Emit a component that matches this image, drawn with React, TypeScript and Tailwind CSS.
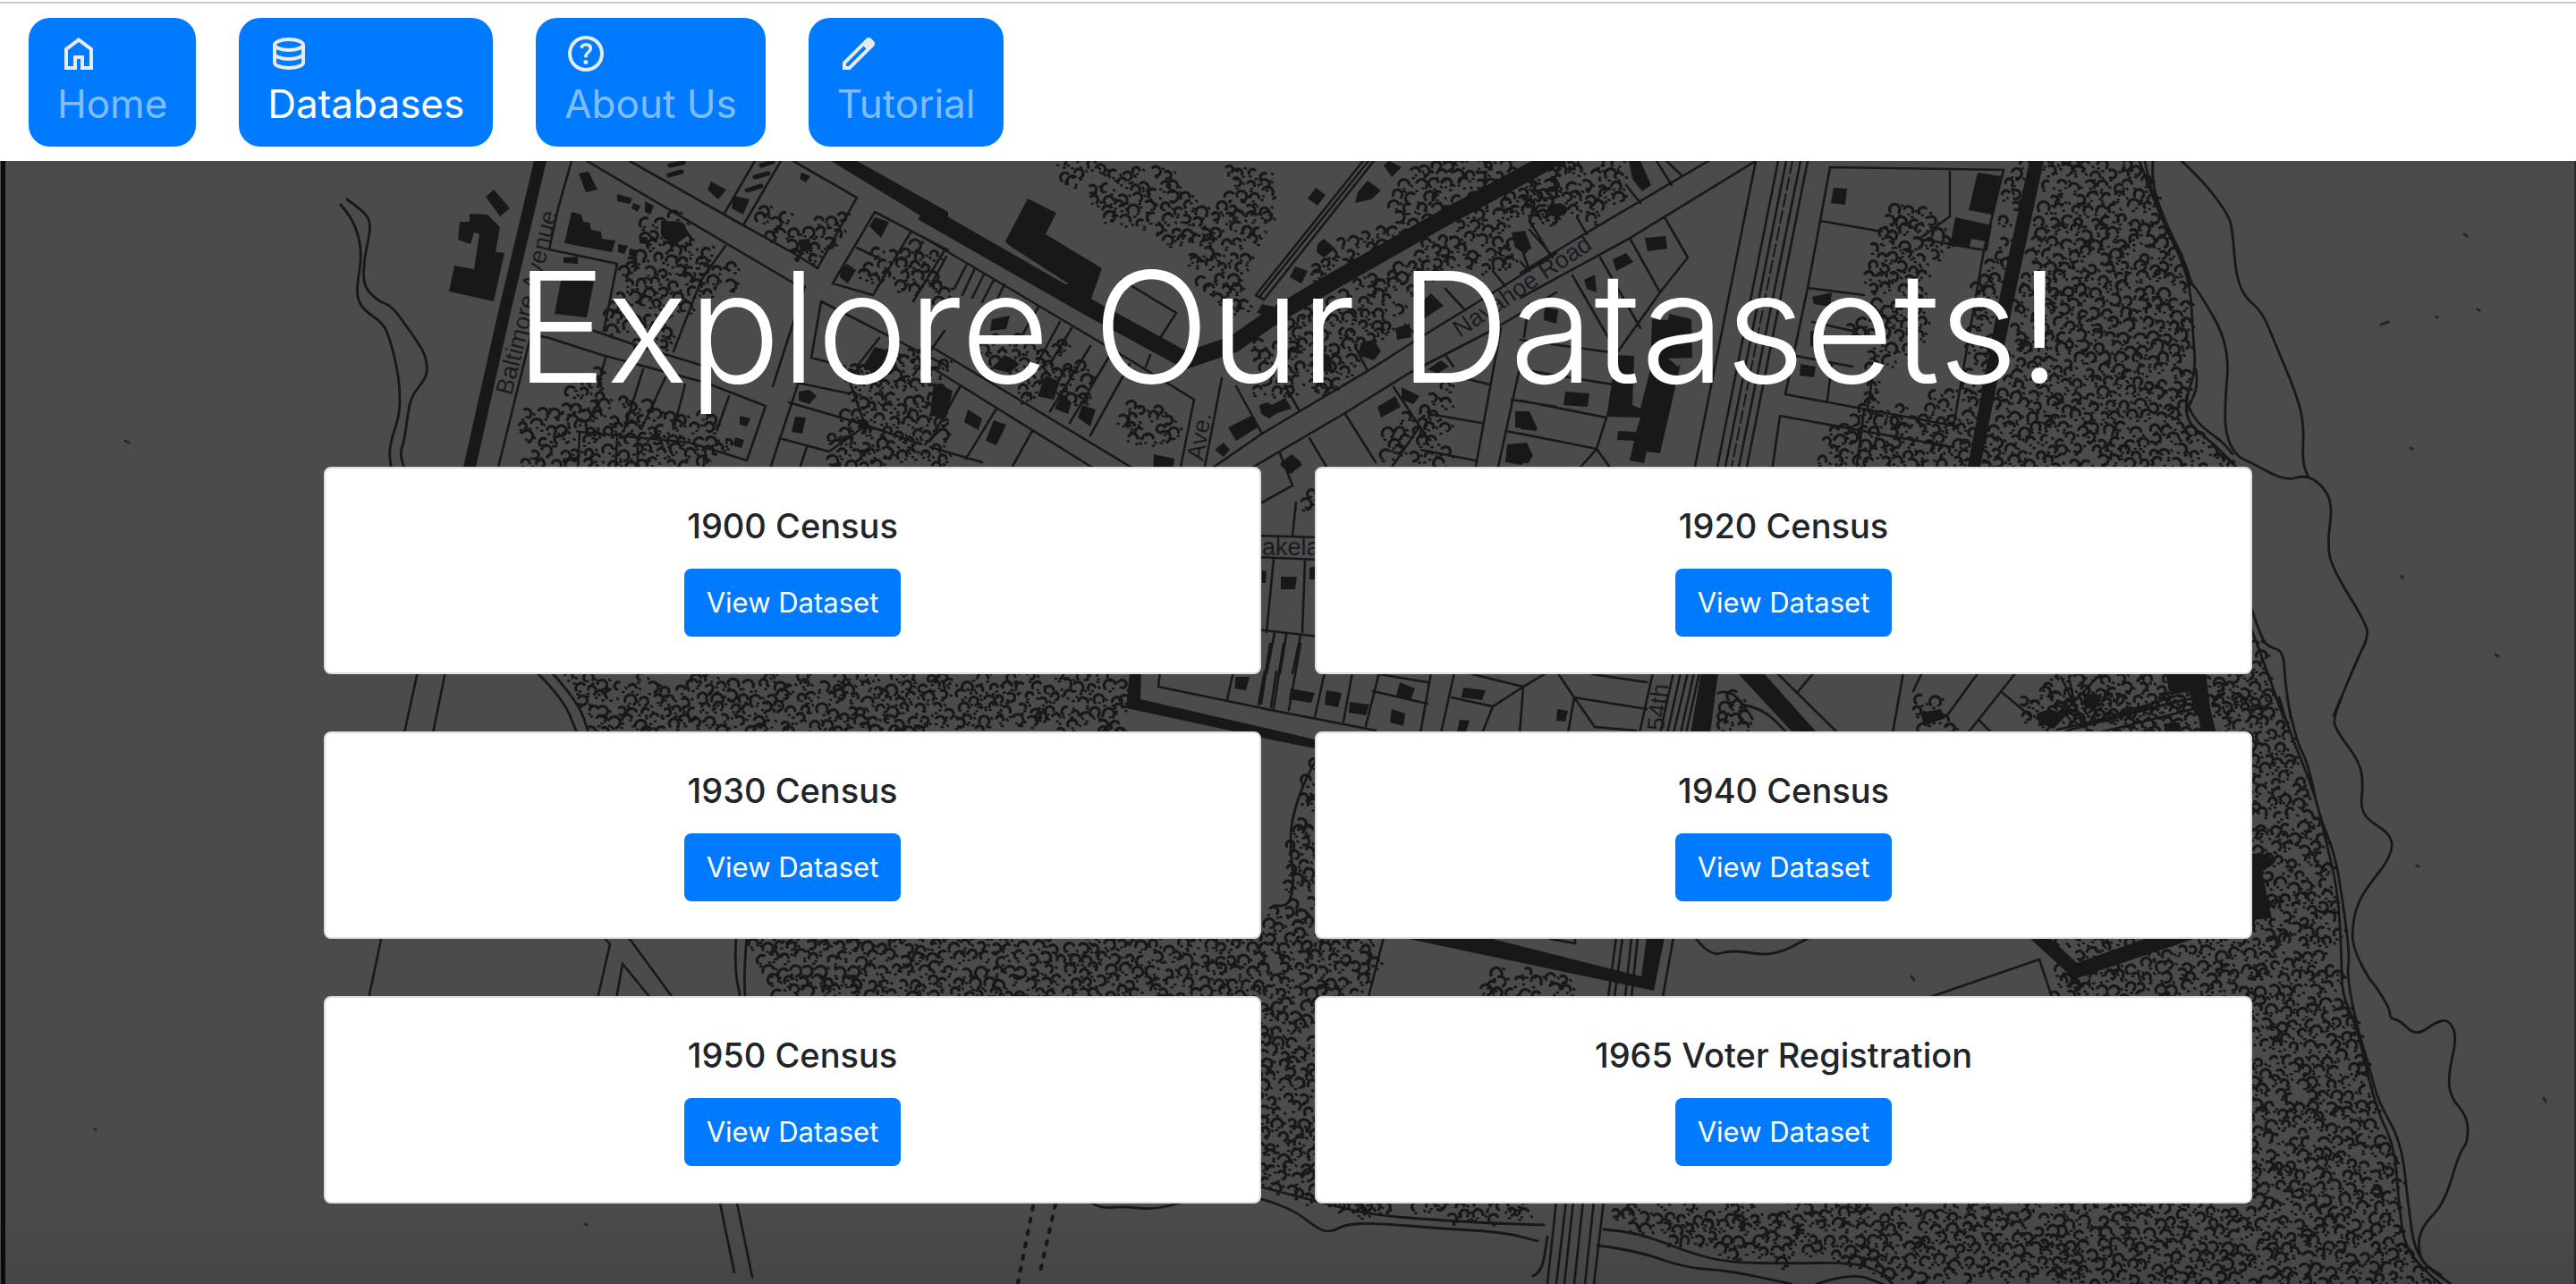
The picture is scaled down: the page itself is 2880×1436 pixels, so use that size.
import React from "react";

type Sheet = { x: number; y: number; sx: number; sy: number };
type Point = [number, number];

/* The survey map is digitised in sheets; each has an origin and a scale. */
const NW: Sheet = { x: 360, y: 180, sx: 2.24, sy: 3 };
const N: Sheet = { x: 1040, y: 180, sx: 2.24, sy: 3 };
const NE: Sheet = { x: 1700, y: 180, sx: 2.24, sy: 3 };
const RIVER_N: Sheet = { x: 2300, y: 180, sx: 2.703, sy: 2.529 };
const RIVER_S: Sheet = { x: 2300, y: 780, sx: 2.703, sy: 2.39 };
const SE: Sheet = { x: 1400, y: 1000, sx: 1.4255, sy: 3 };
const SW: Sheet = { x: 360, y: 740, sx: 1.452, sy: 2.253 };
const MID: Sheet = { x: 1240, y: 720, sx: 1.3067, sy: 3 };
const LAKE: Sheet = { x: 340, y: 500, sx: 1.375, sy: 3 };
const BASE: Sheet = { x: 0, y: 0, sx: 1, sy: 1 };

function pts(s: Sheet, text: string): Point[] {
  return text
    .trim()
    .split(/\s+/)
    .map((p) => {
      const [a, b] = p.split(",").map(Number);
      return [Math.round(s.x + a / s.sx), Math.round(s.y + b / s.sy)] as Point;
    });
}

function straight(s: Sheet, text: string) {
  return text
    .split("|")
    .map((t) => "M" + pts(s, t).map((p) => p.join(" ")).join("L"))
    .join("");
}

function smooth(s: Sheet, text: string) {
  return text
    .split("|")
    .map((t) => {
      const p = pts(s, t);
      let d = `M${p[0].join(" ")}`;
      for (let i = 1; i < p.length - 1; i++) {
        const mx = (p[i][0] + p[i + 1][0]) / 2;
        const my = (p[i][1] + p[i + 1][1]) / 2;
        d += `Q${p[i].join(" ")} ${mx} ${my}`;
      }
      return d + `L${p[p.length - 1].join(" ")}`;
    })
    .join("");
}

function inside(x: number, y: number, poly: Point[]) {
  let hit = false;
  for (let i = 0, j = poly.length - 1; i < poly.length; j = i++) {
    const [xi, yi] = poly[i];
    const [xj, yj] = poly[j];
    if (yi > y !== yj > y && x < ((xj - xi) * (y - yi)) / (yj - yi) + xi) hit = !hit;
  }
  return hit;
}

let seed = 7;
function rand() {
  seed = (seed * 16807) % 2147483647;
  return seed / 2147483647;
}

/* Fills each outline with the scalloped tree-canopy symbol. */
function canopy(s: Sheet, text: string) {
  let arcs = "";
  let dots = "";
  text.split("|").forEach((t) => {
    const poly = pts(s, t);
    const xs = poly.map((p) => p[0]);
    const ys = poly.map((p) => p[1]);
    let row = 0;
    for (let y = Math.min(...ys); y < Math.max(...ys); y += 13) {
      row++;
      for (let x = Math.min(...xs) + (row % 2) * 8; x < Math.max(...xs); x += 16) {
        const cx = x + rand() * 9 - 4;
        const cy = y + rand() * 10 - 4;
        const a = rand() * 2 - 0.8 - Math.PI;
        const sweep = 2.2 + rand() * 2.2;
        const r = 4 + rand() * 2.4;
        const e1 = rand() * 12 - 6;
        const e2 = rand() * 12 - 6;
        if (!inside(cx, cy, poly)) continue;
        const x1 = (cx + r * Math.cos(a)).toFixed(1);
        const y1 = (cy + r * Math.sin(a)).toFixed(1);
        const x2 = (cx + r * Math.cos(a + sweep)).toFixed(1);
        const y2 = (cy + r * Math.sin(a + sweep)).toFixed(1);
        const rr = r.toFixed(1);
        arcs += `M${x1} ${y1}A${rr} ${rr} 0 ${sweep > Math.PI ? 1 : 0} 1 ${x2} ${y2}`;
        dots += `M${(cx + e1).toFixed(1)} ${(cy + 7).toFixed(1)}h1.5M${(cx + 8).toFixed(1)} ${(cy + e2).toFixed(1)}l1 1M${(cx - e2).toFixed(1)} ${(cy + 4).toFixed(1)}h1`;
      }
    }
  });
  return { arcs, dots };
}

const WOODS = [
  canopy(NW, "800,190 850,170 900,195 970,300 1040,370 1030,420 990,440 940,480 890,520 880,620 800,620 710,580 715,500 740,400 760,330 800,250|1080,160 1150,180 1200,200 1290,165 1335,190 1330,240 1280,260 1245,350 1180,330 1120,270 1060,210|1360,310 1480,270 1540,310 1555,400 1480,470 1410,430 1350,380|500,850 600,800 610,700 690,710 700,790 760,800 880,840 990,860 1020,950 960,1040 495,1040|1300,780 1320,690 1480,600 1568,680 1568,1026 1250,1040 1270,900"),
  canopy(N, "310,0 600,0 640,110 690,150 720,120 740,30 800,15 865,45 860,230 790,290 790,500 750,510 700,450 660,410 640,310 560,250 470,220 400,130 330,50|1150,90 1200,20 1260,0 1560,0 1250,210 950,430 920,440 940,390 1010,270 1130,220|1560,30 1568,200 1480,150 1460,360 1400,370 1290,340 1250,420 1180,480 1140,600 1060,620 1050,740 950,780 820,770 790,640 880,560 1000,450 1280,230|460,820 530,780 580,840 620,880 610,950 460,955|270,600 330,610 360,680 400,650 420,700 390,800 240,800 200,700 120,660 150,560 200,560|1150,880 1300,740 1300,890 1290,1026 1120,1000|0,330 60,390 50,470 0,500"),
  canopy(NE, "0,60 40,20 60,0 240,0 275,90 230,140 170,200 130,200 60,200 0,200|925,155 1000,155 1050,190 1060,260 1080,290 1030,330 1010,500 1000,640 900,700 880,830 1000,830 1090,720 1090,890 850,880 870,620 810,640 810,540 860,520 865,400 880,270|1230,20 1270,0 1200,460 1150,850 1118,1040 745,1040 760,900 830,850 1000,860 1100,900 1140,430 1180,290"),
  canopy(RIVER_N, "-40,0 255,0 275,70 320,170 375,280 400,370 410,500 415,590 385,690 400,750 560,880 -235,880|588,1330 640,1450 685,1568 0,1568 0,1450 588,1450"),
  canopy(RIVER_S, "0,0 670,0 700,110 775,260 850,520 855,780 905,900 960,1110 1020,1210 1040,1460 1120,1568 0,1568 0,720 50,740 420,650 0,650"),
  canopy(SE, "575,1038 1290,1038 1290,1308 1015,1308 960,1235 780,1235 650,1165 575,1110|110,1038 455,1038 450,1090 380,1100 200,1070 120,1045|355,290 400,250 490,260 510,345 355,345|1260,220 1310,280 1320,275 1320,345 1275,345|1270,150 1430,150 1315,230"),
  canopy(BASE, "832,1040 1410,1040 1410,1015 1436,1010 1442,940 1455,880 1470,850 1470,1040 1544,1040 1530,1114 1530,1360 1410,1326 900,1200"),
  canopy(SW, "390,32 1310,32 1300,180 432,180 415,100"),
  canopy(MID, "890,170 910,160 935,250 930,292 880,292|1175,170 1210,160 1240,250 1230,292 1165,292|1330,170 1380,95 1385,95 1385,295 1340,292 1340,220"),
  canopy(LAKE, "1520,170 1555,140 1555,215 1525,215"),
];

const BLOCKS = [
  straight(NW, "530,0 562,0 470,520 384,1040 352,1040 440,520|430,95 470,160 445,185 411,120|370,178 415,180 445,222 435,305 457,308 430,470 318,438 332,352 380,362 395,245 380,240 372,278 340,265 345,205 370,205|642,42 668,35 690,95 660,104|625,172 650,180 655,205 670,207 675,232 698,236 702,262 735,268 725,305 608,275|600,388 680,405 662,525 583,512|965,95 975,70 1012,95 992,130|1030,118 1070,130 1055,180 1025,160|1370,220 1385,190 1420,205 1400,258|1300,365 1315,345 1338,365 1318,410 1296,390|1200,40 1223,50 1212,72 1197,60|1385,625 1430,640 1440,690 1390,720 1355,690|1195,775 1220,768 1238,790 1220,815 1195,805|1185,858 1212,862 1203,914 1177,908|1045,855 1073,865 1065,890 1045,885|1035,928 1057,935 1050,962 1030,955|742,280 765,285 757,312 742,305|770,295 792,300 785,325 768,315|1275,0 1340,0 1568,170 1568,240|740,110 778,125 770,145 740,135|780,140 797,150 790,170 775,160|808,135 830,150 822,180 808,170|850,200 900,205 920,245 880,285 850,250|795,255 815,255 812,280 795,275|605,325 640,320 640,345 605,342|1195,265 1220,262 1225,300 1198,305"),
  straight(N, "245,125 315,175 290,245 430,360 400,470 330,430 345,410 200,285 188,270|965,90 990,115 970,150 945,125|1135,15 1150,0 1180,20 1155,55|1095,65 1130,100 1105,130 1065,140 1070,105|970,280 985,262 1015,295 985,325 968,305|915,355 945,370 930,410 900,390|830,480 860,490 850,520 818,510|1215,495 1255,445 1285,485 1235,530|1080,610 1110,600 1130,640 1110,670 1070,650|745,895 805,855 820,895 765,938|825,820 845,810 855,820 890,795 905,830 870,845 850,865 828,850|735,945 750,970 735,992 713,970|1120,825 1165,790 1178,825 1130,860|875,1015 905,983 930,1010 905,1050|95,835 130,865 120,903 85,875|160,870 190,885 165,955 138,940|330,780 355,810 345,850 312,830|380,820 415,835 400,890 370,860|290,720 325,740 310,800 268,790|185,650 225,680 200,710 155,695|10,745 55,770 40,860 0,850|560,985 612,1000 608,1050 558,1050|1455,240 1490,235 1505,290 1490,312 1465,290|1465,840 1500,840 1520,900 1465,895|1445,950 1495,945 1510,990 1480,1020 1440,1010|1180,760 1225,790 1210,815 1180,800|1245,700 1280,670 1300,690 1270,715|1165,560 1200,545 1205,590 1170,600|965,640 1000,650 1010,710 970,700|155,530 200,520 190,565 150,570"),
  straight(NE, "1275,0 1310,0 1230,500 1150,1040 1118,1040 1200,450|1145,38 1203,50 1180,180 1122,165|1088,190 1180,215 1170,300 1160,295 1165,270 1130,262 1125,290 1075,285|785,90 818,92 812,147 778,140|312,258 362,253 368,295 318,303|230,330 265,308 282,340 240,370|160,400 185,380 190,440 165,430|330,530 370,535 372,512 428,530 430,660 370,662 395,690 400,680 350,980 315,975 308,1015 273,1005 285,940 243,935 245,905 290,910 300,860 215,858 240,650 285,655 280,820 300,830 325,700|112,775 172,780 168,825 108,820|0,845 25,850 40,905 0,900|270,0 300,0 328,80 305,103 280,60|0,255 28,290 10,305 0,300|730,455 780,440 775,490 735,480|725,570 760,575 762,632 725,620|700,680 740,690 735,725 698,720|60,490 95,500 90,545 58,535|0,955 30,990 20,1015 0,1010|65,150 100,140 115,175 90,192"),
  straight(RIVER_N, "325,1445 450,1445 465,1568 415,1568 400,1500 345,1510|80,1530 135,1505 125,1540 95,1550"),
  straight(RIVER_S, "415,0 455,0 480,95 435,95|325,70 370,68 370,95 325,95|570,415 640,420 655,445 620,465 650,590 570,595|80,0 120,0 110,30 85,25"),
  straight(SE, "235,145 370,145 620,275 628,145 657,145 640,325|1238,145 1270,145 1315,230 1430,145 1510,145 1310,285"),
  straight(SW, "1311,25 1330,25 1328,95 1568,180 1568,205 1305,118|1483,40 1505,40 1500,70 1483,65"),
  straight(MID, "300,320 300,350 215,312 215,275|185,112 205,112 200,155 183,150|265,150 300,165 295,198 262,185|318,155 340,165 335,212 315,205|352,195 380,205 375,240 350,230|425,130 447,150 440,188 420,175|517,148 550,155 545,188 515,180|413,220 433,235 430,275 410,265|655,220 670,225 667,262 653,258|512,255 527,258 522,295 508,295|865,95 890,95 878,300 850,300|917,95 955,95 1035,300 1000,300|1355,235 1375,220 1398,240 1380,285 1358,265|1420,165 1450,175 1435,220|1185,230 1215,220 1222,250 1190,275"),
  straight(LAKE, "1502,435 1526,435 1524,478 1502,476|1545,405 1556,400 1556,445 1545,445|1500,60 1520,30 1535,60 1515,90|1472,415 1479,418 1478,455 1472,455"),
];

const LINES = [
  straight(NW, "624,0 592,160 568,298|525,578 440,1040|568,298 740,345 705,570|662,0 1195,420|770,0 1055,215 1180,310 1240,360|1085,0 1005,180|1150,0 1055,215|1180,0 1340,122 1240,360|1385,170 1280,410 1380,450|1385,170 1568,300|1475,240 1380,450|1340,290 1400,330|1250,470 1225,660 1310,690|1250,470 1568,690|1395,595 1340,690|1010,285 950,400 880,640|515,580 570,595 700,650 960,745 1112,822 1065,1005|680,570 800,625 960,690|710,660 690,760|805,700 755,910|860,725 800,900|910,750 880,900|1020,790 990,900|645,910 920,945 1065,1005|645,910 640,1040|740,930 735,1040|790,935 790,1040|960,960 955,1040|1210,420 1130,755|1190,745 1320,780|1170,810 1360,885 1500,950|1195,740 1120,1040|1145,930 1270,975|1215,960 1195,1040|1365,885 1270,975|1360,885 1310,700|1560,300 1480,470|1560,570 1480,720|1568,880 1510,950"),
  straight(N, "0,270 490,660 660,800 625,1040|730,730 685,1040|0,620 520,1040|0,690 420,1040|40,320 0,420|90,350 60,430|110,365 80,450|135,380 105,460|160,400 130,475|185,415 160,490|270,490 215,620|325,540 260,700|355,560 300,680|500,680 400,920|450,650 350,880|400,620 300,840|75,760 0,940|165,830 90,1000|255,905 200,1040|0,960 130,1010|550,650 540,690|480,400 615,510 570,610|1085,0 815,450|1110,0 835,465 815,450|1097,0 825,455|695,1040 830,915 925,840 1095,705 1225,595 1435,420 1568,310|790,1040 1035,850 1200,710 1395,575 1568,440|765,755 830,915|890,755 925,840|1065,620 1095,705 1150,660|1290,430 1340,500|1190,550 1225,595|1410,370 1440,420|1500,230 1560,320|1480,290 1500,370|950,930 1000,1040|1040,850 1115,1010|1160,760 1240,920|1290,650 1310,690|1310,720 1400,750|1250,850 1380,880|1230,970 1365,1005|1430,560 1365,1040|1485,640 1420,1040|1455,800 1568,825|1440,905 1568,940|1220,900 1150,1040|1480,700 1568,720"),
  straight(NE, "0,375 160,245 470,0|0,460 270,262 590,0|590,0 435,1040|645,0 490,1040|665,0 510,1040|700,0 545,1040|720,0 565,1040|775,20 1210,30 1160,300 1145,420 1085,890|775,20 750,200 718,425 662,783 1085,888|750,200 905,238|1075,35 1075,185 1000,260 1165,300|718,425 860,450|650,855 630,1040|650,855 1080,960|730,540 830,570|690,655 830,690|780,680 768,805|890,650 870,830|860,840 840,1040|360,190 418,325 350,440|275,265 350,440 245,640|200,325 300,560|130,385 240,640|0,340 20,370|30,215 78,325|140,190 165,245|265,80 300,140|340,0 378,80|365,0 405,50|20,480 10,590|0,600 240,645|0,700 230,750|0,805 215,860 190,965|0,915 190,965 140,1040|190,965 230,1040"),
  straight(RIVER_N, "35,1460 60,1568|170,1568 370,1510"),
  straight(RIVER_S, "0,85 420,0|45,0 75,75|120,95 410,30"),
  straight(SE, "580,145 568,345|590,145 578,345|605,145 595,345|615,145 605,345|672,145 655,345|1080,345 1255,218 1275,345|210,145 185,345|475,150 515,165 515,145|485,1030 470,1308|500,1030 485,1308|512,1030 497,1308|528,1030 513,1308|545,1030 530,1308|560,1030 545,1308|355,145 385,170 385,145"),
  straight(SW, "155,25 133,180|200,25 180,180|1360,25 1358,62 1568,130|1480,25 1470,95|97,690 76,850|455,690 467,712 447,850|495,690 570,850|478,850 488,762 535,850|645,1355 670,1538|673,1355 698,1550|1530,25 1520,108|1550,25 1540,115"),
  straight(MID, "235,0 222,200|255,0 240,215|280,0 262,222|390,292 222,215|315,95 300,245|355,95 343,262|395,95 375,275|385,160 465,200|470,95 455,300|505,95 485,300|395,102 465,130|530,102 605,145 640,95|605,145 560,210 500,180|560,210 545,300|655,95 680,180 785,220|680,180 710,280 770,292|705,102 785,130|680,180 670,300|605,145 600,300|795,95 775,300|825,95 805,300|835,95 815,300|845,95 825,300|855,95 835,300|862,95 843,300|1030,95 1005,165|975,95 1065,300|1160,95 1145,300|1188,95 1175,160|1270,95 1225,240|1325,95 1255,300|1305,165 1345,240|1270,255 1290,300|1450,95 1370,290|1400,290 1568,190|1390,110 1430,290"),
  straight(LAKE, "1465,298 1560,303|1465,370 1560,378|1490,375 1480,620|1538,378 1535,620|1465,612 1560,635|1500,20 1520,130 1472,185|1525,185 1520,298|1492,625 1480,760|1510,630 1500,760|1532,632 1520,760"),
];

const STREAMS = [
  smooth(NW, "62,128 100,165 120,200 118,250 105,330 103,420 140,470 175,485 215,560 255,640 265,690 260,730 225,790 215,850 205,940 195,980 208,1040|48,148 75,190 95,260 98,330 90,400 88,460 105,500 155,545 170,600 185,680 195,760 195,850 175,930 168,980 175,1040"),
  smooth(RIVER_N, "250,0 275,70 320,170 375,280 403,360 412,500 418,590 387,680 395,735 430,770 485,810 560,885|265,0 282,80 325,175 385,290 400,350|290,0 285,60 325,170 385,280 405,350 425,365 522,522 505,700 510,780 540,835 590,855 690,905 750,887 800,915 832,970 815,1080 830,1150 935,1310 938,1350 910,1400 835,1568|375,0 440,55 520,155 530,200 540,330 570,390 620,425 665,530 720,650 745,740 740,850 758,890|400,700 420,740 500,795 530,830|418,590 428,635 395,700|580,1250 615,1350 640,1375 685,1385 690,1480 705,1575|580,1310 640,1460 685,1575"),
  smooth(RIVER_S, "670,0 700,90 775,245 815,400 850,520 860,700 860,790 905,880 960,1090 1020,1200 1030,1330 1050,1470 1120,1540 1160,1568|695,0 720,110 760,180 790,310 840,420 865,560 885,690 875,740 900,860 945,1000 970,1080 1040,1190 1060,1350 1085,1500 1190,1568|860,0 835,50 840,85 915,175 925,240 915,290 935,325 1000,360 1017,400 990,450 960,480 905,550 888,630 900,680 940,750 965,775 1005,835 1005,858 1035,862 1085,907 1150,865 1185,862 1208,905 1180,1010 1190,1070 1240,1120 1242,1190 1215,1215 1170,1350 1110,1405 1090,1450 1100,1510 1160,1545"),
  smooth(SE, "0,975 100,1030 190,1078 310,1095 380,1105 465,1110|14,1022 60,1050 105,1125 125,1135 150,1108 200,1105 300,1122 400,1135 455,1163|560,1125 610,1130 700,1205 760,1235 850,1240 960,1237 1000,1265 1020,1308|550,1178 610,1195 690,1255 760,1262 860,1308|900,1308 955,1270 1005,1308|705,145 728,210 765,185 830,210 890,145|448,1280 462,1268 470,1150"),
  smooth(SW, "345,22 390,90 415,185|370,22 415,100 434,185|672,690 670,770 680,850|690,690 685,770 687,850|1240,1355 1260,1378 1300,1372 1350,1380 1400,1360"),
  smooth(MID, "305,380 285,460 265,600 265,700 270,800 262,880 240,880|925,205 955,215 990,300|890,165 910,150 940,250"),
];

const SPECKS = straight(BASE, "106,1263 107,1263|140,493 144,495|2755,262 2758,264|2662,363 2670,360|2724,354 2725,355|2770,346 2772,347|2695,501 2697,502|2685,644 2686,646|2790,732 2793,734|2844,1228 2846,1232|2702,968 2704,969|654,1369 656,1370|2137,1092 2140,1096");
const HATCHES = straight(NW, "868,48 900,36|872,15 905,6|1065,98 1100,84|1085,55 1118,41|1100,14 1130,4");
const AVENUE = straight(N, "-20,170 395,490 640,670 760,615 850,530 1000,410 1270,205 1580,-20");

function SurveyMap() {
  return (
    <svg
      className="absolute inset-0 h-full w-full bg-[#4a4b4c]"
      viewBox="0 180 2880 1256"
      preserveAspectRatio="xMidYMin slice"
      aria-hidden="true"
    >
      <defs>
        <linearGradient id="fold" x1="0" y1="0" x2="0" y2="1">
          <stop offset="0.93" stopColor="#000" stopOpacity="0" />
          <stop offset="1" stopColor="#000" stopOpacity="0.08" />
        </linearGradient>
      </defs>
      <g fill="none" stroke="#171819" strokeLinecap="round">
        {WOODS.map((w, i) => (
          <g key={i}>
            <path d={w.arcs} strokeWidth="3.2" />
            <path d={w.dots} strokeWidth="2.6" />
          </g>
        ))}
        <path d={LINES.join("")} strokeWidth="2.6" />
        <path d={STREAMS.join("")} strokeWidth="2.8" />
        <path d={straight(NE, "682,0 527,1040")} strokeWidth="2" strokeDasharray="14 5" />
        <path d={straight(SW, "1155,1372 1130,1565|1190,1368 1165,1545")} strokeWidth="4" strokeDasharray="4 10" />
        <path d={SPECKS} strokeWidth="3" opacity="0.7" />
        <path d={HATCHES} strokeWidth="5" />
        <path d={AVENUE} strokeWidth="19" strokeLinecap="butt" />
      </g>
      <path d={BLOCKS.join("")} fill="#171819" />
      <g fill="#1a1b1c" fontFamily="'Liberation Sans', Arial, sans-serif" fontSize="27">
        <text transform="translate(572 443) rotate(-76)">Baltimore Avenue</text>
        <text transform="translate(1632 378) rotate(-34)">Navahoe Road</text>
        <text transform="translate(1345 516) rotate(-80)">Ave.</text>
        <text transform="translate(1860 818) rotate(-84)">54th</text>
        <text x="1411" y="621">akela</text>
      </g>
      <path d="M1 180h5v1256H1z" fill="#0c0c0c" />
      <path d="M2878 180h2v1256h-2z" fill="#2a2b2b" />
      <rect y="180" width="2880" height="1256" fill="url(#fold)" />
    </svg>
  );
}

const ICON = "h-12 w-12";

function HomeIcon() {
  return (
    <svg className={ICON} viewBox="0 -960 960 960" fill="#e8eaed" aria-hidden="true">
      <path d="M240-200h120v-240h240v240h120v-360L480-740 240-560v360Zm-80 80v-480l320-240 320 240v480H520v-240h-80v240H160Zm320-350Z" />
    </svg>
  );
}

function DatabaseIcon() {
  return (
    <svg className={ICON} viewBox="0 0 24 24" fill="none" stroke="#e8eaed" strokeWidth="2" aria-hidden="true">
      <ellipse cx="12" cy="7" rx="8" ry="3" />
      <path d="M4 7v10c0 1.66 3.58 3 8 3s8-1.340 8-3V7M4 12c0 1.660 3.580 3 8 3s8-1.340 8-3" />
    </svg>
  );
}

function HelpIcon() {
  return (
    <svg className={ICON} viewBox="0 -960 960 960" fill="#e8eaed" aria-hidden="true">
      <path d="M478-240q21 0 35.5-14.5T528-290q0-21-14.500-35.500T478-340q-21 0-35.500 14.500T428-290q0 21 14.500 35.500T478-240Zm-36-154h74q0-33 7.500-52t42.500-52q26-26 41-49.500t15-56.500q0-56-41-86t-97-30q-57 0-92.500 30T342-618l66 26q5-18 22.500-39t53.500-21q32 0 48 17.500t16 38.500q0 20-12 37.500T506-526q-44 39-54 59t-10 73Zm38 314q-83 0-156-31.500T197-197q-54-54-85.500-127T80-480q0-83 31.500-156T197-763q54-54 127-85.500T480-880q83 0 156 31.500T763-763q54 54 85.500 127T880-480q0 83-31.500 156T763-197q-54 54-127 85.500T480-80Zm0-80q134 0 227-93t93-227q0-134-93-227t-227-93q-134 0-227 93t-93 227q0 134 93 227t227 93Zm0-320Z" />
    </svg>
  );
}

function PencilIcon() {
  return (
    <svg className={ICON} viewBox="0 -960 960 960" fill="#e8eaed" aria-hidden="true">
      <path d="M200-200h57l391-391-57-57-391 391v57Zm-80 80v-170l528-527q12-11 26.500-17t30.500-6q16 0 31 6t26 18l55 56q12 11 17.500 26t5.500 30q0 16-5.500 30.500T817-647L290-120H120Z" />
    </svg>
  );
}

const NAV = [
  { label: "Home", Icon: HomeIcon, active: false },
  { label: "Databases", Icon: DatabaseIcon, active: true },
  { label: "About Us", Icon: HelpIcon, active: false },
  { label: "Tutorial", Icon: PencilIcon, active: false },
];

const DATASETS = [
  "1900 Census",
  "1920 Census",
  "1930 Census",
  "1940 Census",
  "1950 Census",
  "1965 Voter Registration",
];

function DatasetCard({ title }: { title: string }) {
  return (
    <article className="flex flex-col items-center rounded-lg border-2 border-[#dfdfdf] bg-white p-10 text-center">
      <h2 className="mb-6 text-[38px] leading-12 font-medium text-[#212529]">{title}</h2>
      <a href="#" className="rounded-lg bg-[#007bff] px-[25px] py-3.5 text-[31px] leading-12 text-white">
        View Dataset
      </a>
    </article>
  );
}

export default function App() {
  return (
    <div className="flex min-h-screen flex-col bg-white font-['Inter',sans-serif]">
      <header className="pt-0.5">
        <nav className="flex gap-12 border-t-2 border-[#cccccc] px-8 py-4">
          {NAV.map(({ label, Icon, active }) => (
            <a
              key={label}
              href="#"
              aria-current={active ? "page" : undefined}
              className={
                active
                  ? "rounded-3xl bg-[#007bff] px-8 py-4 text-white"
                  : "rounded-3xl bg-[#007bff] px-8 py-4 text-white/50"
              }
            >
              <Icon />
              <span className="block text-[44px] leading-16">{label}</span>
            </a>
          ))}
        </nav>
      </header>
      <main className="relative flex flex-1 flex-col items-center overflow-hidden pt-[70px] pb-[90px]">
        <SurveyMap />
        <h1 className="relative mb-[42px] text-center text-[172px] leading-[230px] font-[350] text-white">
          Explore Our Datasets!
        </h1>
        <div className="relative grid w-3/4 grid-cols-2 gap-x-[60px] gap-y-16 px-0.5">
          {DATASETS.map((title) => (
            <DatasetCard key={title} title={title} />
          ))}
        </div>
      </main>
    </div>
  );
}
